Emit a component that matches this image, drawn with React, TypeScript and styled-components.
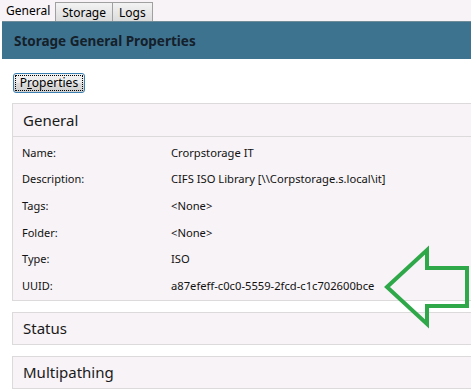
import React from 'react';
import styled, { createGlobalStyle } from 'styled-components';

const GlobalStyle = createGlobalStyle`
  body {
    margin: 0;
    background: #ffffff;
    font-family: 'Noto Sans', 'Open Sans', sans-serif;
    overflow: hidden;
  }
`;

const Page = styled.div`
  position: relative;
  width: 471px;
  height: 390px;
  overflow: hidden;
  background: #ffffff;
`;

const TabStrip = styled.div`
  display: flex;
  align-items: flex-end;
  height: 21px;
  background: #f7f3f6;
`;

const Tab = styled.div<{ $active?: boolean }>`
  height: ${p => (p.$active ? '21px' : '19px')};
  box-sizing: border-box;
  padding: 0 6px;
  display: flex;
  align-items: center;
  font-size: 12px;
  color: #000000;
  background: ${p =>
    p.$active ? '#f7f3f6' : 'linear-gradient(#f3f3f3, #dcdcdc)'};
  border: ${p => (p.$active ? 'none' : '1px solid #a0a0a0')};
  border-bottom: none;
  margin-left: -1px;
  &:first-child {
    margin-left: 0;
    padding: 0 6px 0 6px;
  }
`;

const HeaderBar = styled.div`
  margin-left: 2px;
  height: 38px;
  box-sizing: border-box;
  background: #3e7390;
  border-top: 1px solid #6f8c98;
  display: flex;
  align-items: center;
  padding-left: 12px;
  font-size: 13.5px;
  font-weight: 700;
  color: #14202a;
`;

const Content = styled.div`
  padding: 14px 0 0 12px;
  display: flex;
  flex-direction: column;
`;

const Button = styled.button`
  align-self: flex-start;
  margin-left: 1px;
  width: 72px;
  height: 20px;
  box-sizing: border-box;
  border: 1px solid #3c7fb1;
  border-radius: 3px;
  background: linear-gradient(#f2f2f2 0%, #ebebeb 50%, #dddddd 51%, #cfcfcf 100%);
  outline: 1px dotted #000000;
  outline-offset: -3px;
  font-family: 'Noto Sans', 'Open Sans', sans-serif;
  font-size: 12px;
  color: #000000;
  padding: 0;
  line-height: 16px;
`;

const Panel = styled.div`
  margin-top: 10px;
  width: 480px;
  box-sizing: border-box;
  background: #f7f3f6;
  border: 1px solid #dcdadb;
  & + & {
    margin-top: 11px;
  }
`;

const PanelHeader = styled.div<{ $divider?: boolean }>`
  height: ${p => (p.$divider ? '33px' : '31px')};
  box-sizing: border-box;
  display: flex;
  align-items: center;
  padding-left: 10px;
  font-size: 15px;
  color: #1a1a1a;
  border-bottom: ${p => (p.$divider ? '1px solid #dcdadb' : 'none')};
`;

const Rows = styled.div`
  padding: 2px 0 1px 0;
`;

const Row = styled.div`
  display: grid;
  grid-template-columns: 149px 1fr;
  height: 26.6px;
  align-items: center;
  padding-left: 9px;
  font-size: 11px;
  color: #111111;
  & > span + span {
    font-size: 11.2px;
  }
`;

const Arrow = styled.svg`
  position: absolute;
  left: 380px;
  top: 244px;
`;

const rows: [string, string][] = [
  ['Name:', 'Crorpstorage IT'],
  ['Description:', 'CIFS ISO Library [\\\\Corpstorage.s.local\\it]'],
  ['Tags:', '<None>'],
  ['Folder:', '<None>'],
  ['Type:', 'ISO'],
  ['UUID:', 'a87efeff-c0c0-5559-2fcd-c1c702600bce'],
];

export default function App() {
  return (
    <Page>
      <GlobalStyle />
      <TabStrip>
        <Tab $active>General</Tab>
        <Tab>Storage</Tab>
        <Tab>Logs</Tab>
      </TabStrip>
      <HeaderBar>Storage General Properties</HeaderBar>
      <Content>
        <Button type="button">
          P<u>r</u>operties
        </Button>
        <Panel>
          <PanelHeader $divider>General</PanelHeader>
          <Rows>
            {rows.map(([k, v]) => (
              <Row key={k}>
                <span>{k}</span>
                <span>{v}</span>
              </Row>
            ))}
          </Rows>
        </Panel>
        <Panel>
          <PanelHeader>Status</PanelHeader>
        </Panel>
        <Panel>
          <PanelHeader>Multipathing</PanelHeader>
        </Panel>
      </Content>
      <Arrow width="91" height="86" viewBox="0 0 91 86">
        <polygon
          points="7,43 47,6 47,24 87,24 87,62 47,62 47,80"
          fill="none"
          stroke="#2fa84a"
          strokeWidth="4"
          strokeLinejoin="miter"
        />
      </Arrow>
    </Page>
  );
}
